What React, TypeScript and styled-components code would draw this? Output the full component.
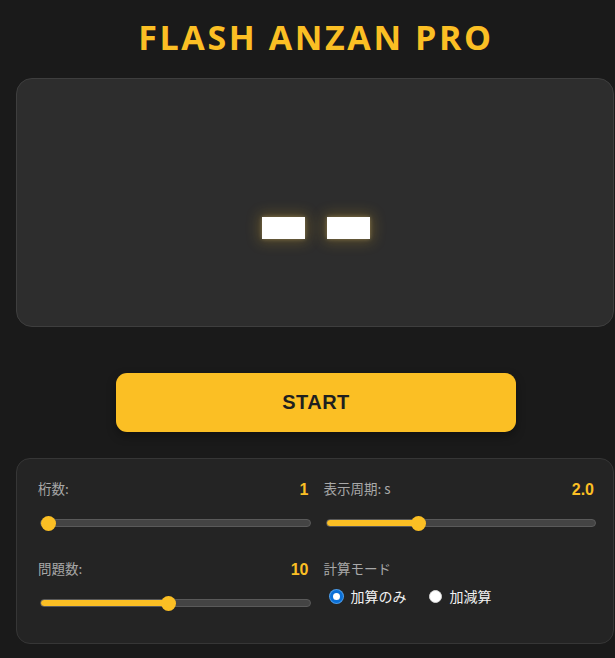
import React, { useState } from "react";
import styled, { createGlobalStyle } from "styled-components";

const Global = createGlobalStyle`
  html, body { margin: 0; padding: 0; background: #1a1a1a; }
  body { font-family: "Liberation Sans", Arial, "Noto Sans CJK JP", sans-serif; color: #e5e5e5; overflow: hidden; }
  * { box-sizing: border-box; }
`;

const Page = styled.div`
  width: 615px;
  height: 658px;
  padding: 17px 0 0 16px;
`;

const Column = styled.div`
  width: 598px;
  display: flex;
  flex-direction: column;
  align-items: center;
`;

const Title = styled.h1`
  margin: 0 0 21px 2px;
  font-family: "Open Sans", "Noto Sans", sans-serif;
  font-weight: 700;
  font-size: 34px;
  line-height: 40px;
  letter-spacing: 2.6px;
  color: #fbbf24;
`;

const Display = styled.div`
  width: 100%;
  height: 249px;
  background: #2d2d2d;
  border: 1px solid #3e3e3e;
  border-radius: 16px;
  display: flex;
  align-items: center;
  justify-content: center;
  gap: 22px;
  padding: 50px 0 0 2px;
`;

const Dash = styled.span`
  display: block;
  width: 43px;
  height: 22px;
  background: #ffffff;
  box-shadow: 0 0 14px 3px rgba(251, 191, 36, 0.22), 0 0 4px rgba(255, 230, 160, 0.35);
`;

const StartButton = styled.button`
  margin: 46px 0 0 2px;
  width: 400px;
  height: 59px;
  border: none;
  border-radius: 11px;
  background: #fbbf24;
  color: #1f1f1f;
  font-family: "Liberation Sans", Arial, sans-serif;
  font-weight: 700;
  font-size: 20px;
  letter-spacing: 0.5px;
  cursor: pointer;
  box-shadow: 0 4px 10px rgba(0, 0, 0, 0.35);
`;

const Panel = styled.div`
  margin-top: 26px;
  width: 100%;
  height: 186px;
  background: #242424;
  border: 1px solid #363636;
  border-radius: 14px;
  padding: 19px 17px 0 21px;
  display: grid;
  grid-template-columns: 1fr 1fr;
  column-gap: 13px;
  row-gap: 31px;
  align-content: start;
`;

const Setting = styled.div`
  display: flex;
  flex-direction: column;
`;

const Header = styled.div`
  display: flex;
  justify-content: space-between;
  align-items: center;
  height: 20px;
  padding-right: 2px;
`;

const Label = styled.span`
  font-family: "Noto Sans CJK JP", "Liberation Sans", sans-serif;
  font-size: 13.5px;
  color: #a8a8a8;
`;

const Value = styled.span`
  margin-top: 3px;
  font-family: "Liberation Sans", Arial, sans-serif;
  font-weight: 700;
  font-size: 16px;
  color: #fbbf24;
`;

const Range = styled.input`
  -webkit-appearance: none;
  appearance: none;
  margin: 21px 0 0 2px;
  width: calc(100% - 2px);
  height: 8px;
  border-radius: 4px;
  border: 1px solid #5a5a5a;
  outline: none;
  &::-webkit-slider-thumb {
    -webkit-appearance: none;
    width: 15px;
    height: 15px;
    border-radius: 50%;
    background: #fbbf24;
    border: none;
    cursor: pointer;
  }
`;

const RadioRow = styled.div`
  display: flex;
  align-items: center;
  gap: 22px;
  margin-top: 8px;
  padding-left: 6px;
`;

const RadioLabel = styled.label`
  display: flex;
  align-items: center;
  gap: 8px;
  font-family: "Noto Sans CJK JP", "Liberation Sans", sans-serif;
  font-size: 14px;
  color: #f2f2f2;
  cursor: pointer;
`;

const RadioDot = styled.span<{ $on: boolean }>`
  width: 13px;
  height: 13px;
  border-radius: 50%;
  background: #ffffff;
  border: ${(p) => (p.$on ? "3px solid #0a6fd6" : "1px solid #d8d8d8")};
  box-shadow: ${(p) => (p.$on ? "0 0 0 1px #4a9be8" : "none")};
`;

const HiddenRadio = styled.input`
  position: absolute;
  opacity: 0;
  width: 0;
  height: 0;
`;

function Slider({ min, max, step, value, onChange }: { min: number; max: number; step: number; value: number; onChange: (v: number) => void }) {
  const pct = ((value - min) / (max - min)) * 100;
  return (
    <Range
      type="range"
      min={min}
      max={max}
      step={step}
      value={value}
      onChange={(e) => onChange(Number(e.target.value))}
      style={{ background: `linear-gradient(to right, #fbbf24 0%, #fbbf24 ${pct}%, #444 ${pct}%, #444 100%)` }}
    />
  );
}

export default function App() {
  const [digits, setDigits] = useState(1);
  const [speed, setSpeed] = useState(2.0);
  const [count, setCount] = useState(10);
  const [mode, setMode] = useState<"add" | "mix">("add");

  return (
    <Page>
      <Global />
      <Column>
        <Title>FLASH ANZAN PRO</Title>
        <Display aria-label="--">
          <Dash />
          <Dash />
        </Display>
        <StartButton>START</StartButton>
        <Panel>
          <Setting>
            <Header>
              <Label>桁数:</Label>
              <Value>{digits}</Value>
            </Header>
            <Slider min={1} max={5} step={1} value={digits} onChange={setDigits} />
          </Setting>
          <Setting>
            <Header>
              <Label>表示周期: s</Label>
              <Value>{speed.toFixed(1)}</Value>
            </Header>
            <Slider min={0.5} max={5} step={0.1} value={speed} onChange={setSpeed} />
          </Setting>
          <Setting>
            <Header>
              <Label>問題数:</Label>
              <Value>{count}</Value>
            </Header>
            <Slider min={1} max={20} step={1} value={count} onChange={setCount} />
          </Setting>
          <Setting>
            <Header>
              <Label>計算モード</Label>
            </Header>
            <RadioRow>
              <RadioLabel>
                <HiddenRadio type="radio" name="mode" checked={mode === "add"} onChange={() => setMode("add")} />
                <RadioDot $on={mode === "add"} />
                加算のみ
              </RadioLabel>
              <RadioLabel>
                <HiddenRadio type="radio" name="mode" checked={mode === "mix"} onChange={() => setMode("mix")} />
                <RadioDot $on={mode === "mix"} />
                加減算
              </RadioLabel>
            </RadioRow>
          </Setting>
        </Panel>
      </Column>
    </Page>
  );
}
